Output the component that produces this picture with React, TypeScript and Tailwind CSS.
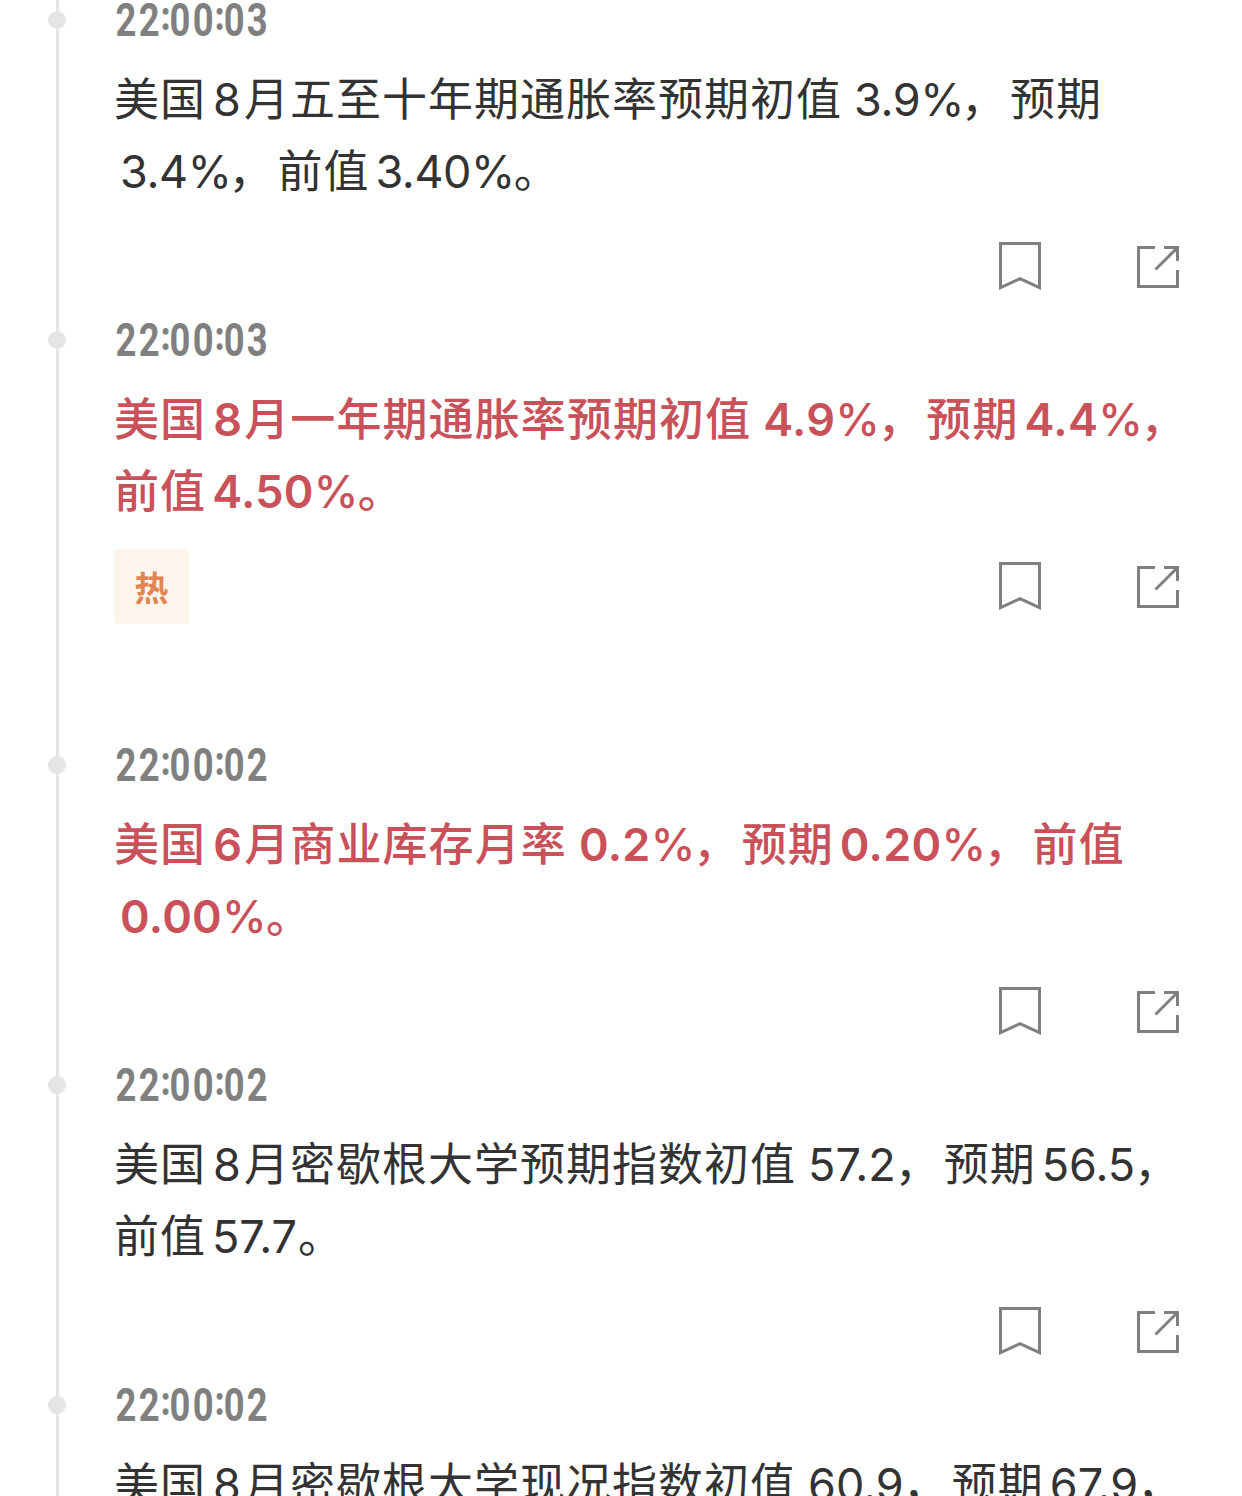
import clsx from 'clsx';

type NewsItem = {
  time: string,
  lines: string[],
  important?: boolean,
  hot?: boolean,
};

const news: NewsItem[] = [
  { time: '22:00:03', lines: ['美国8月五至十年期通胀率预期初值 3.9%，预期', '3.4%，前值3.40%。'] },
  { time: '22:00:03', lines: ['美国8月一年期通胀率预期初值 4.9%，预期4.4%，', '前值4.50%。'], important: true, hot: true },
  { time: '22:00:02', lines: ['美国6月商业库存月率 0.2%，预期0.20%，前值', '0.00%。'], important: true },
  { time: '22:00:02', lines: ['美国8月密歇根大学预期指数初值 57.2，预期56.5，', '前值57.7。'] },
  { time: '22:00:02', lines: ['美国8月密歇根大学现况指数初值 60.9，预期67.9，', '前值68.0。'] },
];

function BookmarkIcon() {
  return (
    <svg className="w-[42px] h-[49px]" viewBox="0 0 42 49" fill="none" stroke="#808080" strokeWidth="3">
      <path d="M1.5 1.5h39v44.2L21 36.7 1.5 45.7z" />
    </svg>
  );
}

function ShareIcon() {
  return (
    <svg className="w-[42px] h-[42px]" viewBox="0 0 42 42" fill="none" stroke="#808080" strokeWidth="3">
      <path d="M18 1.5H1.5v39h39V24M27 1.5h13.5V15M40 2L18.5 23.5" />
    </svg>
  );
}

function Time({ value }: { value: string }) {
  return (
    <div className="h-10 w-[210px] pl-[2px] flex items-center origin-left scale-x-[0.79] font-['Roboto'] font-bold text-[46px] leading-10 text-[#808080] whitespace-pre">
      {value.split(/(:)/).map((part, i) => (
        part === ':'
          ? <span key={i} className="w-[10px] flex justify-center font-black text-[41px] pb-2">:</span>
          : <span key={i} className="tracking-[2.8px]">{part}</span>
      ))}
    </div>
  );
}

// digits get a little air on both sides when they sit next to chinese characters
function Line({ text, important }: { text: string, important?: boolean }) {
  const parts = text.split(/( ?[0-9.%]+|[，。])/).filter(Boolean);
  return (
    <div className="flex h-[72px] leading-[72px] whitespace-pre">
      {parts.map((part, i) => {
        if (part === '，') return <span key={i} className="w-[46px] -indent-[3px]">{part}</span>;
        if (part === '。') return <span key={i} className="w-[46px] -indent-[1px]">{part}</span>;
        if (!/[0-9]/.test(part)) return <span key={i} className={important ? 'tracking-[1.1px]' : 'tracking-[1px]'}>{part}</span>;
        const spaced = part.startsWith(' ');
        const single = part.length === 1;
        const percent = part.endsWith('%');
        return (
          <span
            key={i}
            className={clsx(
              spaced ? 'ml-3' : single ? 'w-[31px] ml-[7px]' : 'ml-[6px]',
              !single && !percent && 'mr-[2px]',
              important ? 'font-semibold' : 'font-normal',
              percent && (important ? 'tracking-[0.3px]' : 'tracking-[-0.4px]')
            )}
          >
            {part.trim().replace('%', '')}
            {percent && <span className={important ? 'font-medium' : ''}>%</span>}
          </span>
        );
      })}
    </div>
  );
}

function Item({ item }: { item: NewsItem }) {
  return (
    <div className={clsx('relative pl-[55px]', item.hot ? 'h-[425px]' : 'h-[320px]')}>
      <div className="absolute -left-[11px] top-[11px] w-[18px] h-[18px] rounded-full bg-[#e5e5e5]" />
      <Time value={item.time} />
      <div className={clsx("mt-6 font-['Inter','Noto_Sans_CJK_SC',sans-serif] text-[45px]", item.important ? 'text-[#c9515a] font-medium' : 'text-[#333333]')}>
        {item.lines.map((line) => <Line key={line} text={line} important={item.important} />)}
      </div>
      <div className="mt-[21px] h-[75px] flex items-center">
        {item.hot && (
          <div className="w-[75px] h-[75px] rounded-[3px] bg-[#fbf5eb] flex items-center justify-center font-['Noto_Sans_CJK_SC',sans-serif] font-bold text-[34px] leading-none text-[#e28453]">
            热
          </div>
        )}
        <div className="ml-auto mr-[63px] flex items-center gap-24">
          <BookmarkIcon />
          <ShareIcon />
        </div>
      </div>
    </div>
  );
}

export default function App() {
  return (
    <main className="w-[1242px] h-[1496px] overflow-hidden bg-white pl-14">
      <div className="border-l-[3px] border-[#e5e5e5]">
        {news.map((item, i) => <Item key={i} item={item} />)}
      </div>
    </main>
  );
}
